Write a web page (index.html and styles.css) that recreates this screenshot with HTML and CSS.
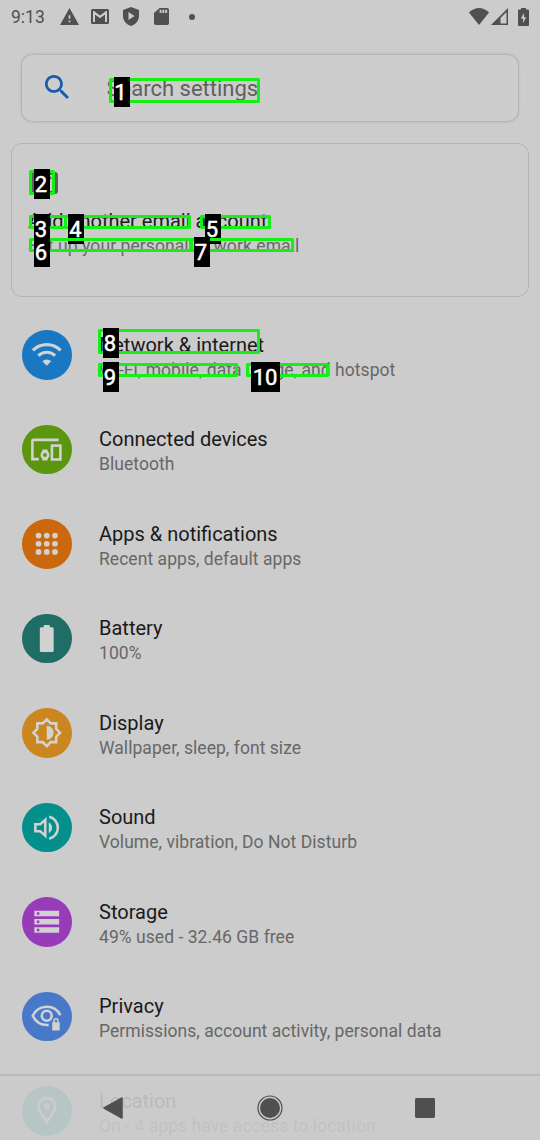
FILE: index.html
```html
<!DOCTYPE html>
<html lang="en">
<head>
<meta charset="utf-8">
<title>Settings</title>
<link rel="stylesheet" href="styles.css">
</head>
<body>
<div class="screen">
  <header class="status">
    <span class="clock">9:13</span>
    <svg class="st st-warn" viewBox="1 2 22 19" preserveAspectRatio="none"><path d="M1 21h22L12 2 1 21zm12-3h-2v-2h2v2zm0-4h-2v-4h2v4z"/></svg>
    <svg class="st st-mail" viewBox="0 0 18 15"><path fill-rule="evenodd" d="M1.500 0h15A1.500 1.500 0 0 1 18 1.500v12a1.500 1.500 0 0 1-1.500 1.500h-15A1.500 1.500 0 0 1 0 13.500v-12A1.500 1.500 0 0 1 1.500 0zM2 2v11h2V5.500l5 3.700 5-3.700V13h2V2h-1L9 6.500 3 2z"/></svg>
    <svg class="st st-shield" viewBox="0 0 16 19"><path fill-rule="evenodd" d="M8 0l8 3v6c0 4.500-3.400 8.600-8 10-4.600-1.400-8-5.500-8-10V3zM5.500 5v8l6-4z"/></svg>
    <svg class="st st-sd" viewBox="0 0 16 20" preserveAspectRatio="none"><path d="M14 0H6L0 6v12c0 1.100.9 2 2 2h12c1.100 0 2-.9 2-2V2c0-1.100-.9-2-2-2zM8 6H6V2h2v4zm3 0H9V2h2v4zm3 0h-2V2h2v4z"/></svg>
    <span class="dot"></span>
    <span class="grow"></span>
    <svg class="st st-wifi" viewBox="0 0 20 17"><path d="M10 17L0 4.500C3 1.500 6.500 0 10 0s7 1.500 10 4.500z"/></svg>
    <svg class="st st-cell" viewBox="0 0 17 17"><path fill-rule="evenodd" d="M0 17L17 0v17zM9.500 10v5.500h6V4z"/></svg>
    <svg class="st st-batt" viewBox="0 0 11 18"><path fill-rule="evenodd" d="M3 0h5v1.500h2a1 1 0 0 1 1 1V17a1 1 0 0 1-1 1H1a1 1 0 0 1-1-1V2.500a1 1 0 0 1 1-1h2zM6 5L2.800 10.500H5V15l3.200-5.800H6z"/></svg>
  </header>

  <div class="search">
    <svg class="search-icon" viewBox="3 3 17.500 17.500"><path d="M15.500 14h-.79l-.28-.27C15.410 12.590 16 11.110 16 9.500 16 5.910 13.090 3 9.500 3S3 5.910 3 9.500 5.910 16 9.500 16c1.610 0 3.090-.59 4.230-1.570l.27.28v.79l5 4.990L20.490 19l-4.990-5zm-6 0C7.010 14 5 11.990 5 9.500S7.010 5 9.500 5 14 7.010 14 9.500 11.990 14 9.500 14z"/></svg>
    <span class="search-text">Search settings</span>
  </div>

  <section class="card">
    <svg class="card-icon" viewBox="0 0 29 22"><rect x="4" y="1.500" width="23.500" height="19" rx="1.500"/><path d="M7 3l9 7 6-5"/></svg>
    <div class="card-title">Add another email account</div>
    <div class="card-sub">Set up your personal or work email</div>
  </section>

  <main class="list">
    <div class="row"><span class="ic wifi"><svg viewBox="0 0 50 50"><g class="line wide"><path d="M11 20.500a20 20 0 0 1 28 0"/><path d="M16.500 26a12 12 0 0 1 17 0"/></g><path d="M20.500 31.500a6.500 6.500 0 0 1 9 0L25 36z"/></svg></span><div class="tx"><div class="t">Network &amp; internet</div><div class="s">Wi-Fi, mobile, data usage, and hotspot</div></div></div>
    <div class="row"><span class="ic devices"><svg viewBox="0 0 50 50"><g class="line"><path d="M37 15H11.500a1 1 0 0 0-1 1V34.500H17"/><rect x="30.200" y="20.800" width="8.600" height="14"/><circle cx="23.200" cy="30.300" r="3.200"/></g><path d="M20.800 24.800h4.800l.7 2.500h-6.200zM20.800 35.800h4.800l.7-2.500h-6.200z"/></svg></span><div class="tx"><div class="t">Connected devices</div><div class="s">Bluetooth</div></div></div>
    <div class="row"><span class="ic apps"><svg viewBox="0 0 50 50"><circle cx="16.700" cy="16.700" r="2.900"/><circle cx="25" cy="16.700" r="2.900"/><circle cx="33.300" cy="16.700" r="2.900"/><circle cx="16.700" cy="25" r="2.900"/><circle cx="25" cy="25" r="2.900"/><circle cx="33.300" cy="25" r="2.900"/><circle cx="16.700" cy="33.300" r="2.900"/><circle cx="25" cy="33.300" r="2.900"/><circle cx="33.300" cy="33.300" r="2.900"/></svg></span><div class="tx"><div class="t">Apps &amp; notifications</div><div class="s">Recent apps, default apps</div></div></div>
    <div class="row"><span class="ic battery"><svg viewBox="0 0 50 50"><path d="M22 11h6v2.500h2.500A1.500 1.500 0 0 1 32 15v22a1.500 1.500 0 0 1-1.500 1.500h-11A1.500 1.500 0 0 1 18 37V15a1.500 1.500 0 0 1 1.500-1.500H22z"/></svg></span><div class="tx"><div class="t">Battery</div><div class="s">100%</div></div></div>
    <div class="row"><span class="ic display"><svg viewBox="0 0 50 50"><path class="line" d="M25 11.500l4 4h5.500V21l4 4-4 4v5.500H29l-4 4-4-4h-5.500V29l-4-4 4-4v-5.500H21z"/><path d="M25 18a7 7 0 0 1 0 14z"/></svg></span><div class="tx"><div class="t">Display</div><div class="s">Wallpaper, sleep, font size</div></div></div>
    <div class="row"><span class="ic sound"><svg viewBox="0 0 50 50"><path class="line" d="M13.500 21.500h5l5-4.500v16l-5-4.500h-5z"/><path d="M27 19.500c4.500 2.500 4.500 8.500 0 11z"/><path class="line" d="M27.500 14a11.300 11.300 0 0 1 0 22"/></svg></span><div class="tx"><div class="t">Sound</div><div class="s">Volume, vibration, Do Not Disturb</div></div></div>
    <div class="row"><span class="ic storage"><svg viewBox="0 0 50 50"><path fill-rule="evenodd" d="M12.500 14h25v5.500h-25zM15 15.500V18h2.500v-2.500zM12.500 22.200h25v5.500h-25zM15 23.700v2.500h2.500v-2.500zM12.500 30.500h25V36h-25zM15 32v2.500h2.500V32z"/></svg></span><div class="tx"><div class="t">Storage</div><div class="s">49% used - 32.46 GB free</div></div></div>
    <div class="row"><span class="ic privacy"><svg viewBox="0 0 50 50"><g class="line"><path d="M27 33.300C19 34 13.500 29.500 10.800 24 17 12 33 12 38.800 23.500"/><circle cx="25" cy="24" r="5"/></g><path fill-rule="evenodd" d="M30.500 30.500h1V29a2.800 2.800 0 0 1 5.600 0v1.500h1V39h-7.600zM33 30.500h2.600V29a1.300 1.300 0 0 0-2.600 0z"/></svg></span><div class="tx"><div class="t">Privacy</div><div class="s">Permissions, account activity, personal data</div></div></div>
    <div class="row"><span class="ic location"><svg viewBox="0 0 50 50"><path class="line" d="M25 36.500C20 29.500 16.500 25 16.500 20.500a8.500 8.500 0 0 1 17 0C33.500 25 30 29.500 25 36.500z"/><circle cx="25" cy="20.500" r="3"/></svg></span><div class="tx"><div class="t">Location</div><div class="s">On - 4 apps have access to location</div></div></div>
  </main>

  <nav class="nav">
    <svg viewBox="0 0 20 22"><path d="M19 1v20L1 11z" stroke="#505050" stroke-width="1.500" stroke-linejoin="round"/></svg>
    <svg class="home" viewBox="0 0 26 26"><circle cx="13" cy="13" r="10"/><circle class="ring" cx="13" cy="13" r="12"/></svg>
    <svg viewBox="0 0 21 21"><rect width="21" height="21" rx="1.500"/></svg>
  </nav>

  <svg class="marks" viewBox="0 0 540 1140">
    <g class="boxes">
      <rect x="110.500" y="79.500" width="148" height="22"/>
      <rect x="30.500" y="171.500" width="23" height="22"/>
      <rect x="30.500" y="216.500" width="35" height="11"/>
      <rect x="65.500" y="216.500" width="124" height="11"/>
      <rect x="201.500" y="216.500" width="68" height="11"/>
      <rect x="30.500" y="239.500" width="160" height="11"/>
      <rect x="191.500" y="239.500" width="101" height="11"/>
      <rect x="99.500" y="330.500" width="159" height="22"/>
      <rect x="99.500" y="364.500" width="137" height="11"/>
      <rect x="247.500" y="364.500" width="80" height="11"/>
    </g>
    <g>
      <rect x="114" y="77" width="16" height="30"/>
      <rect x="34" y="169" width="16" height="30"/>
      <rect x="34" y="214" width="16" height="30"/>
      <rect x="68" y="214" width="16" height="30"/>
      <rect x="205" y="214" width="16" height="30"/>
      <rect x="34" y="237" width="16" height="30"/>
      <rect x="194" y="237" width="16" height="30"/>
      <rect x="103" y="328" width="16" height="30"/>
      <rect x="103" y="362" width="16" height="30"/>
      <rect x="251" y="362" width="29" height="30"/>
    </g>
    <g class="boxes"><path d="M67 239.500h18M210 239.500h12"/></g>
    <g class="nums">
      <text x="120.500" y="100">1</text>
      <text x="41" y="192">2</text>
      <text x="41" y="237">3</text>
      <text x="75.500" y="237">4</text>
      <text x="212" y="237">5</text>
      <text x="41" y="260">6</text>
      <text x="201" y="260">7</text>
      <text x="110" y="351">8</text>
      <text x="110" y="385">9</text>
      <text x="265" y="385">10</text>
    </g>
  </svg>
</div>
</body>
</html>
```
FILE: styles.css
```css
* { box-sizing: border-box; }
body { margin: 0; background: #ccc; font-family: Roboto, sans-serif; }
.screen { position: relative; width: 540px; height: 1140px; overflow: hidden; }
svg { display: block; flex: none; }

.status { display: flex; align-items: center; height: 33px; padding: 0 11px; color: #505050; fill: #505050; }
.clock { width: 49px; font-size: 17.500px; }
.st-warn { width: 19px; height: 17px; }
.st-mail { width: 18px; height: 15px; margin-left: 12px; }
.st-shield { width: 16px; height: 19px; margin-left: 14px; }
.st-sd { width: 15px; height: 17px; margin-left: 15px; }
.dot { width: 6px; height: 6px; margin-left: 19.500px; border-radius: 50%; background: #505050; }
.grow { flex: 1; }
.st-wifi { width: 20px; height: 17px; }
.st-cell { width: 17px; height: 17px; margin-left: 2px; }
.st-batt { width: 11px; height: 18px; margin: 0 0 0 10px; }

.search { display: flex; align-items: center; height: 66px; margin: 22px 22px 0; padding-left: 23px; border-radius: 10px; background: #cdcdcd; box-shadow: 0 0 3px rgba(0,0,0,.3); }
.search-icon { width: 24px; height: 24px; margin-bottom: 2px; fill: #1a5bb0; }
.search-text { margin-left: 37.500px; font-size: 22px; line-height: 26px; color: #606060; padding-top: 2px; }

.card { height: 154px; margin: 22px 11px 0; padding: 27.500px 16px 0; border: 1.500px solid #b4b4b4; border-radius: 11px; }
.card-icon { width: 29px; height: 22px; margin-left: 1px; fill: none; stroke: #606060; stroke-width: 3; }
.card-title { margin-top: 14px; font-size: 20px; line-height: 26px; color: #1c1c1c; white-space: nowrap; }
.card-sub { padding-top: 1px; font-size: 17.500px; line-height: 23px; color: #686868; letter-spacing: .08px; }

.list { padding-top: 11px; }
.row { display: flex; align-items: center; height: 94.500px; padding-left: 22px; }
.ic { flex: none; width: 49.500px; height: 49.500px; margin-bottom: 1px; border-radius: 50%; fill: #d2d2d2; }
.ic svg { width: 49.500px; height: 49.500px; }
.line { fill: none; stroke: #d2d2d2; stroke-width: 2.600; }
.wide { stroke-width: 3.200; }
.wifi { background: #1a78c2; }
.devices { background: #5c960e; }
.apps { background: #cb670d; }
.battery { background: #1f6d65; }
.display { background: #cb861f; }
.sound { background: #038f8b; }
.storage { background: #983bb9; }
.privacy { background: #4879c8; }
.location { background: #00968f; }
.tx { margin-left: 27.500px; padding-top: 3px; white-space: nowrap; }
.t { font-size: 20px; line-height: 26px; color: #1a1a1a; }
.s { font-size: 17.500px; line-height: 24px; color: #676767; letter-spacing: .05px; }

.nav { position: absolute; left: 0; right: 0; top: 1074px; height: 65px; display: flex; justify-content: space-between; align-items: center; padding: 0 105px 0 103px; border-top: 2px solid #b9b9b9; background: rgba(203,203,203,.9); box-shadow: 0 2px 0 rgba(203,203,203,.9); fill: #505050; }
.nav svg { width: 20px; height: 22px; }
.nav .home { width: 26px; height: 26px; margin-left: 2px; }
.ring { fill: none; stroke: #505050; stroke-width: 1.200; }

.marks { position: absolute; left: 0; top: 0; width: 540px; height: 1140px; }
.boxes { fill: none; stroke: #15ef15; stroke-width: 3; stroke-linejoin: round; }
.nums { fill: #fff; stroke: #fff; stroke-width: .5; stroke-linejoin: round; font: 400 22px Roboto, sans-serif; text-anchor: middle; }
```
